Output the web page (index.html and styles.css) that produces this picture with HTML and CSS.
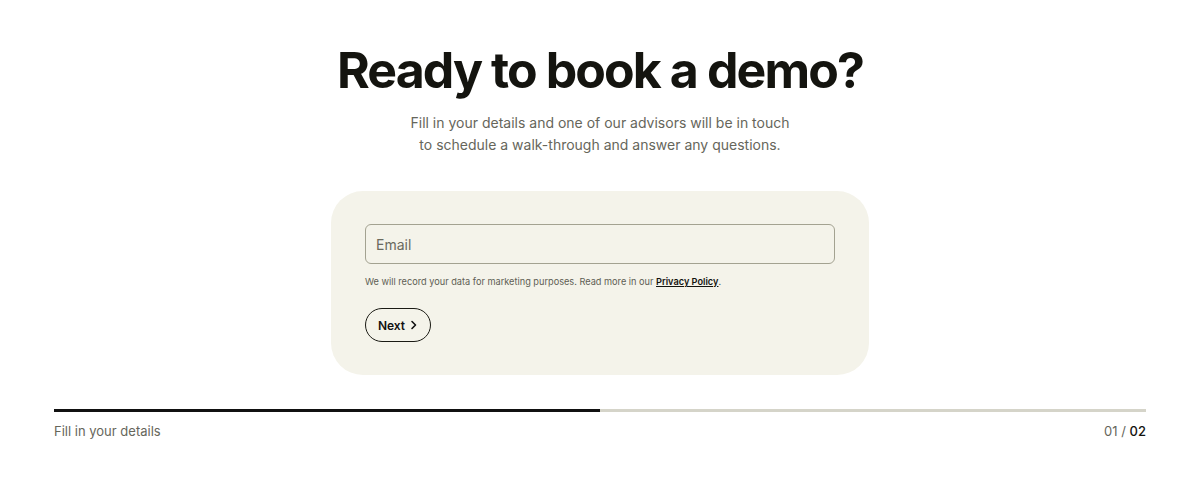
FILE: index.html
```html
<!DOCTYPE html>
<html lang="en">
<head>
<meta charset="utf-8">
<title>Book a demo</title>
<link rel="stylesheet" href="styles.css">
</head>
<body>
<main class="page">
  <header class="intro">
    <h1 class="title">Ready to book a demo?</h1>
    <p class="lead">Fill in your details and one of our advisors will be in touch<br>to schedule a walk-through and answer any questions.</p>
  </header>
  <form class="card">
    <input class="field" type="email" placeholder="Email">
    <p class="note">We will record your data for marketing purposes. Read more in our <a href="#" class="link">Privacy Policy</a>.</p>
    <button type="button" class="next">Next
      <svg class="chev" width="8" height="10" viewBox="0 0 8 10"><path d="M2 1.5 L5.5 5 L2 8.5" fill="none" stroke="#111" stroke-width="1.6" stroke-linecap="round" stroke-linejoin="round"/></svg>
    </button>
  </form>
  <section class="progress">
    <div class="track"><div class="fill" style="width:50%"></div></div>
    <div class="meta">
      <span class="step">Fill in your details</span>
      <span class="count">01 / <b>02</b></span>
    </div>
  </section>
</main>
</body>
</html>
```
FILE: styles.css
```css
* { box-sizing: border-box; }
html, body { margin: 0; background: #fff; }
body {
  font-family: Inter, "Noto Sans", sans-serif;
  color: #14140f;
}
.page {
  display: flex;
  flex-direction: column;
  align-items: center;
  padding-top: 37px;
}
.intro { text-align: center; }
.title {
  margin: 0;
  font-size: 50px;
  line-height: 66px;
  font-weight: 650;
  letter-spacing: -1.9px;
  color: #14140f;
}
.lead {
  margin: 9px 0 0;
  font-size: 14px;
  line-height: 22px;
  color: #66665b;
}
.card {
  margin-top: 35px;
  width: 538px;
  height: 184px;
  background: #f4f3ea;
  border-radius: 32px;
  padding: 33px 34px;
  display: flex;
  flex-direction: column;
  align-items: flex-start;
}
.field {
  width: 470px;
  height: 40px;
  border: 1px solid #a3a291;
  border-radius: 6px;
  background: transparent;
  padding: 0 10px;
  font-family: inherit;
  font-size: 14px;
  color: #14140f;
  outline: none;
}
.field::placeholder { color: #6a6a5e; }
.note {
  margin: 11px 0 0;
  font-size: 9.2px;
  line-height: 14px;
  color: #5e5e54;
}
.link {
  color: #14140f;
  font-weight: 600;
  text-decoration: underline;
}
.next {
  margin-top: 19px;
  height: 34px;
  width: 66px;
  border: 1px solid #1a1a14;
  border-radius: 17px;
  background: transparent;
  font-family: inherit;
  font-size: 12px;
  font-weight: 600;
  color: #111;
  display: flex;
  align-items: center;
  justify-content: center;
  gap: 5px;
  padding: 0;
}
.progress {
  align-self: stretch;
  margin: 34px 54px 0;
}
.track {
  height: 3px;
  background: #d5d4c9;
}
.fill {
  height: 100%;
  background: #111;
}
.meta {
  display: flex;
  justify-content: space-between;
  margin-top: 10px;
  font-size: 13px;
  line-height: 18px;
  color: #66665b;
}
.count b { font-weight: 500; color: #14140f; }
```
